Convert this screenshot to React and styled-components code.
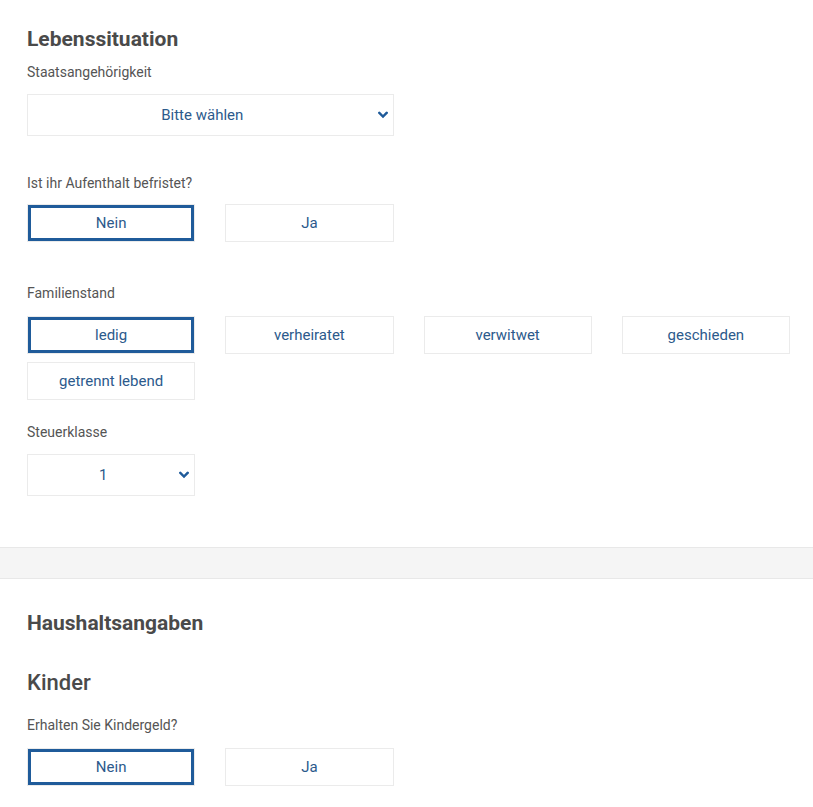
import React, { useState } from "react";
import styled, { createGlobalStyle } from "styled-components";

const GlobalStyle = createGlobalStyle`
  html, body { margin: 0; padding: 0; background: #ffffff; }
  body { font-family: Roboto, "Liberation Sans", Arial, sans-serif; }
  * { box-sizing: border-box; }
`;

const Page = styled.div`
  width: 813px;
  background: #fff;
`;

const Section = styled.section`
  padding: ${(p) => p.$pad || "0"};
  padding-left: 27px;
  padding-right: 23px;
  display: flex;
  flex-direction: column;
`;

const Heading = styled.h2`
  margin: 0;
  font-size: 21px;
  line-height: 28px;
  font-weight: ${(p) => (p.$medium ? 500 : 700)};
  font-size: ${(p) => (p.$medium ? "22px" : "21px")};
  color: #4a4a4a;
  margin-bottom: ${(p) => p.$mb || "0"};
`;

const Label = styled.div`
  font-size: 14px;
  line-height: 20px;
  color: #555555;
  margin-top: ${(p) => p.$mt || "0"};
  margin-bottom: ${(p) => p.$mb || "12px"};
`;

const Grid = styled.div`
  display: grid;
  grid-template-columns: repeat(4, 1fr);
  column-gap: 30px;
  row-gap: 8px;
`;

const Choice = styled.button`
  height: 38px;
  background: #fff;
  border: 1px solid #ebebeb;
  box-shadow: ${(p) => (p.$active ? "inset 0 0 0 3px #1f5b9a" : "none")};
  font-family: Roboto, "Liberation Sans", Arial, sans-serif;
  font-size: 15px;
  color: #2c5a8c;
  cursor: pointer;
  padding: 0 8px;
`;

const SelectWrap = styled.div`
  position: relative;
  grid-column: span ${(p) => p.$span || 1};
  height: 42px;
`;

const Select = styled.select`
  appearance: none;
  -webkit-appearance: none;
  width: 100%;
  height: 42px;
  border: 1px solid #ebebeb;
  background: #fff;
  border-radius: 0;
  font-family: Roboto, "Liberation Sans", Arial, sans-serif;
  font-size: 15px;
  color: #2c5a8c;
  text-align: center;
  text-align-last: center;
  padding: 0 26px 0 10px;
  outline: none;
`;

const Chevron = styled.svg`
  position: absolute;
  right: 6px;
  top: 50%;
  transform: translateY(-50%);
  width: 10px;
  height: 7px;
  pointer-events: none;
`;

const Band = styled.div`
  height: 32px;
  background: #f5f5f5;
  border-top: 1px solid #e8e8e8;
  border-bottom: 1px solid #e8e8e8;
`;

function Dropdown({ span, options, value }) {
  return (
    <SelectWrap $span={span}>
      <Select defaultValue={value}>
        {options.map((o) => (
          <option key={o}>{o}</option>
        ))}
      </Select>
      <Chevron viewBox="0 0 10 7">
        <path d="M1.3 1.3 L5 5 L8.7 1.3" fill="none" stroke="#1f5b9a" strokeWidth="2.4" strokeLinecap="square" />
      </Chevron>
    </SelectWrap>
  );
}

function ChoiceGroup({ options, initial }) {
  const [sel, setSel] = useState(initial);
  return (
    <Grid>
      {options.map((o) => (
        <Choice key={o} $active={sel === o} onClick={() => setSel(o)}>
          {o}
        </Choice>
      ))}
    </Grid>
  );
}

export default function App() {
  return (
    <Page>
      <GlobalStyle />
      <Section $pad="25px 0 51px 0">
        <Heading $mb="9px">Lebenssituation</Heading>
        <Label>Staatsangehörigkeit</Label>
        <Grid>
          <Dropdown span={2} options={["Bitte wählen", "Deutsch", "Andere"]} value="Bitte wählen" />
        </Grid>
        <Label $mt="37px" $mb="11px">Ist ihr Aufenthalt befristet?</Label>
        <ChoiceGroup options={["Nein", "Ja"]} initial="Nein" />
        <Label $mt="41px" $mb="13px">Familienstand</Label>
        <ChoiceGroup
          options={["ledig", "verheiratet", "verwitwet", "geschieden", "getrennt lebend"]}
          initial="ledig"
        />
        <Label $mt="22px" $mb="12px">Steuerklasse</Label>
        <Grid>
          <Dropdown span={1} options={["1", "2", "3", "4", "5", "6"]} value="1" />
        </Grid>
      </Section>
      <Band />
      <Section $pad="30px 0 20px 0">
        <Heading $mb="32px">Haushaltsangaben</Heading>
        <Heading $medium $mb="18px">Kinder</Heading>
        <Label $mb="13px">Erhalten Sie Kindergeld?</Label>
        <ChoiceGroup options={["Nein", "Ja"]} initial="Nein" />
      </Section>
    </Page>
  );
}
